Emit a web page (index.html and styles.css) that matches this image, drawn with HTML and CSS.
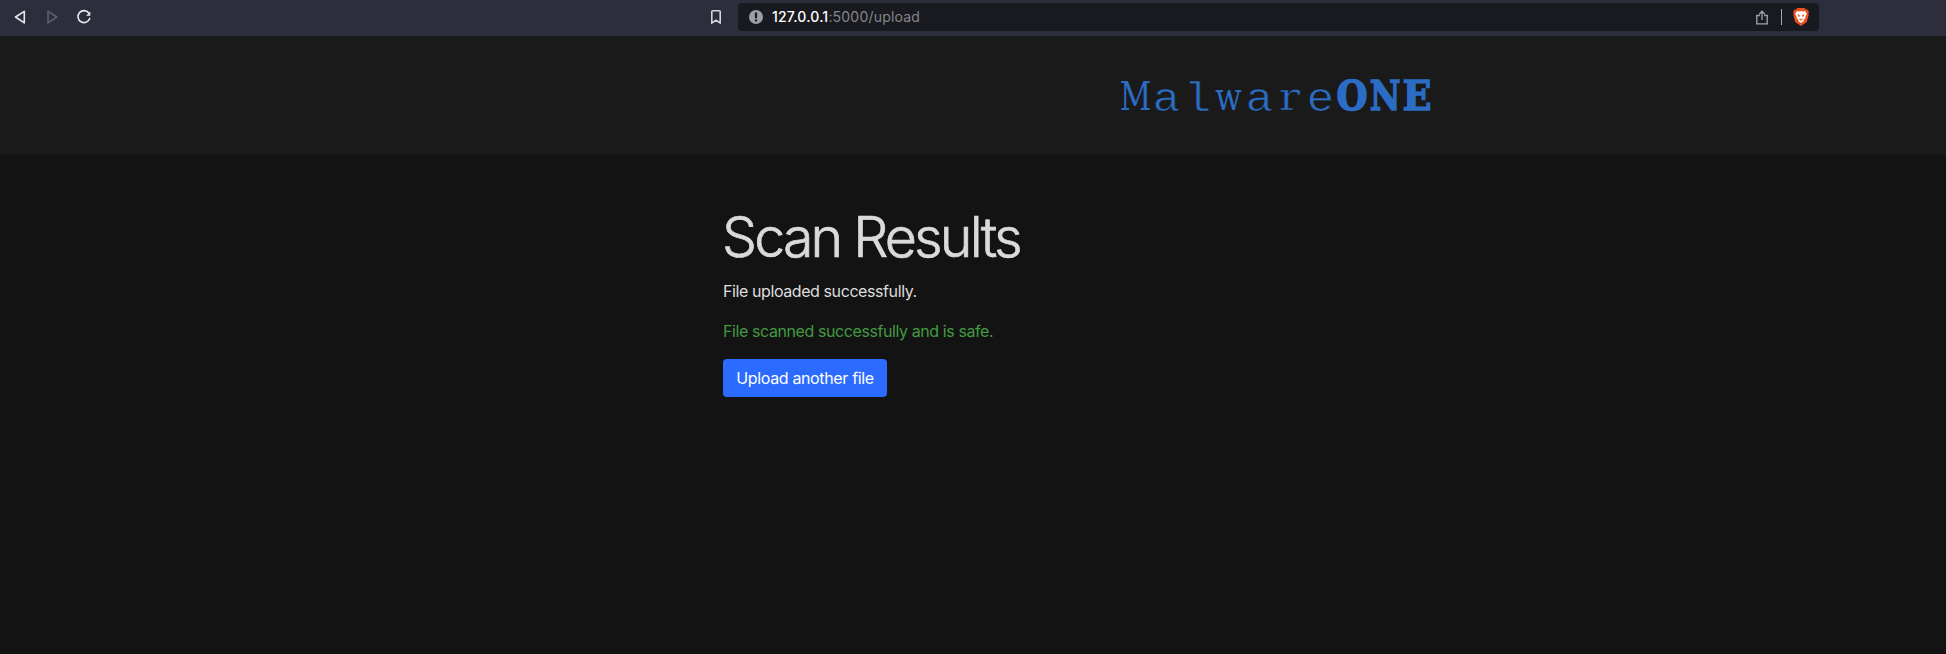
FILE: index.html
```html
<!DOCTYPE html>
<html lang="en">
<head>
<meta charset="utf-8">
<title>MalwareONE</title>
<link rel="stylesheet" href="styles.css">
</head>
<body>
<div class="toolbar">
  <svg class="nav" width="110" height="36" viewBox="0 0 110 36" fill="none" stroke-width="1.6" stroke-linejoin="round" stroke-linecap="round">
    <path stroke="#e8e8ec" d="M24.300 11.300v11.600L15.500 17z"/>
    <path stroke="#5d5f6c" d="M48 11.300v11.600L56.800 17z"/>
    <path stroke="#e8e8ec" d="M88.800 13A6 6 0 1 0 89.700 18.500"/>
    <path fill="#e8e8ec" d="M90.300 11.500v4.200h-4.200z"/>
  </svg>
  <svg class="bookmark" width="12" height="16" viewBox="0 0 12 16" fill="none" stroke="#d4d4da" stroke-width="1.600" stroke-linejoin="round"><path d="M2.600 1.800h6.800q.8 0 .8.800v11.600L6 11.200l-4.200 3V2.600q0-.8.8-.8z"/></svg>
  <div class="address">
    <svg width="14" height="14" viewBox="0 0 14 14"><circle cx="7" cy="7" r="7" fill="#9a9fa5"/><path fill="#191a20" d="M5.900 2.500h2.200v5.700H5.900zM5.900 9.500h2.200v2.100H5.900z"/></svg>
    <span class="url"><b>127.0.0.1</b>:5000/upload</span>
    <svg class="share" width="12" height="15" viewBox="0 0 12 15" fill="none" stroke="#a5a6ab" stroke-width="1.300"><path d="M3.800 5.500H.8v8.300h10.400V5.500H8.200M6 10V1.500M3.200 4.200L6 1.300l2.800 2.900"/></svg>
    <span class="divider"></span>
    <svg class="brave" width="16" height="18" viewBox="0 0 16 18"><path fill="#e8501f" d="M4.300 0h7.400l1.500 1.700 1.400-.1L16 4l-.6 1.600.3 1.500-1.900 7L8 18l-5.800-3.900-1.900-7 .3-1.500L0 4l1.400-2.400 1.400.1z"/><path fill="#fff" d="M4 3l2 .5L8 3l2 .5 2-.5 1.800 2.800-1.500 3 .2 1.200-2.100 1.900.2 1.400L8 15l-2.600-1.700.2-1.400L3.500 10l.2-1.200-1.500-3z"/><path fill="#e8501f" d="M4.200 6.300l2.600.8-.3 1.800-1.200-.7zM11.800 6.300l-2.600.8.3 1.800 1.200-.7zM6.200 10.300L8 11.300l1.800-1-.6 1.600L8 12.500l-1.200-.6z"/></svg>
  </div>
</div>
<header class="header"><div class="logo"><span class="thin"><span class="slab">M</span><span>a</span><span>l</span><span class="slab">w</span><span>a</span><span class="slab wide">r</span><span>e</span></span><span class="bold"><span class="round">O</span><span>N</span><span class="wide">E</span></span></div></header>
<main class="content">
  <h1>Scan Results</h1>
  <p class="status">File uploaded successfully.</p>
  <p class="safe">File scanned successfully and is safe.</p>
  <a class="button">Upload another file</a>
</main>
</body>
</html>
```
FILE: styles.css
```css
* { box-sizing: border-box; }
body { margin: 0; height: 654px; overflow: hidden; background: #131313; color: #dedede; font-family: Inter, sans-serif; font-size: 16px; }
.toolbar { display: flex; height: 36px; background: #2c2e3b; }
.nav { flex: none; }
.bookmark { margin: 9px 16px 0 600px; flex: none; }
.address { display: flex; align-items: center; width: 1081px; height: 28px; margin-top: 3px; padding: 0 10px 0 11px; border-radius: 4px; background: #191a20; }
.url { margin: -1px 0 0 9px; font-size: 14px; letter-spacing: .2px; color: #85868b; white-space: nowrap; }
.url b { color: #fff; font-weight: 500; }
.share { margin-left: auto; }
.divider { width: 1px; height: 16px; margin: 0 11px 0 13px; background: #a5a6ab; }
.header { height: 119px; padding: 33px 0 0 1120px; background: #1a1a1a; color: #2b6cc4; }
.logo { display: flex; height: 54px; line-height: 54px; }
.thin, .bold { display: flex; }
.thin span { width: 30.900px; padding-top: 4px; text-align: center; font-family: "Liberation Mono", monospace; font-size: 41px; -webkit-text-stroke: .7px #1a1a1a; transform: scaleX(1.13); }
.thin .slab { display: flex; justify-content: center; padding-top: 1px; font-family: "DejaVu Serif", serif; font-size: 39px; -webkit-text-stroke: 0; transform: scaleX(.79); }
.thin .wide { transform: scaleX(1.15); -webkit-text-stroke: .6px #1a1a1a; }
.bold span { display: flex; justify-content: center; width: 32.300px; font-family: "DejaVu Serif", serif; font-weight: 700; font-size: 41px; -webkit-text-stroke: 1.500px #2b6cc4; transform: scaleX(.82); }
.bold .round { transform: scaleX(.87); }
.bold .wide { transform: scaleX(.93); }
.content { padding: 48px 0 0 723px; }
h1 { margin: 0 0 0 -1px; font-size: 55.500px; font-weight: 300; line-height: 67px; letter-spacing: -2.850px; -webkit-text-stroke: .7px #dadada; color: #dadada; }
p { margin: 0 0 16px; line-height: 24px; letter-spacing: -.41px; }
.status { margin-top: 9px; }
.safe { color: #429a42; }
.button { display: inline-flex; align-items: center; justify-content: center; width: 164px; height: 38px; border-radius: 4px; background: #2c6bff; color: #fff; letter-spacing: -.35px; }
```
